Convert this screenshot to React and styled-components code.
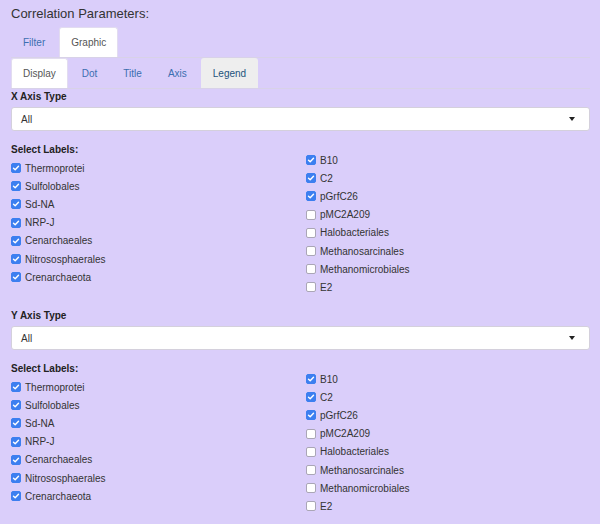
import React from "react";
import styled, { createGlobalStyle } from "styled-components";

const GlobalStyle = createGlobalStyle`
  html, body {
    margin: 0;
    padding: 0;
    background: #dacefa;
  }
  body {
    font-family: "Liberation Sans", Arial, sans-serif;
    color: #333;
  }
`;

const Page = styled.div`
  padding: 6px 10px 0 11px;
  width: 579px;
`;

const Title = styled.div`
  font-size: 13px;
  line-height: 15px;
  color: #333;
  margin-bottom: 6px;
`;

const TabBar = styled.div`
  display: flex;
  border-bottom: 1px solid #d8d2e8;
`;

const Tab = styled.div`
  font-size: 10px;
  line-height: 15px;
  padding: 7px 11px;
  margin-right: 2px;
  border: 1px solid transparent;
  border-bottom: none;
  border-radius: 3px 3px 0 0;
  color: ${(p) => (p.$active ? "#555" : p.$hover ? "#23527c" : "#3a6fb0")};
  background: ${(p) => (p.$active ? "#fff" : p.$hover ? "#eee" : "transparent")};
  border-color: ${(p) => (p.$active ? "#e2dcf0" : "transparent")};
`;

const Section = styled.div`
  margin-bottom: 11.5px;
`;

const FieldLabel = styled.div`
  font-size: 10px;
  font-weight: bold;
  line-height: 15px;
  color: #222;
  margin-bottom: 3px;
`;

const Select = styled.div`
  height: 24px;
  box-sizing: border-box;
  background: #fff;
  border: 1px solid #d4d0dc;
  border-radius: 3px;
  display: flex;
  align-items: center;
  padding: 0 9px;
  font-size: 10px;
  color: #333;
  margin-bottom: 11px;
`;

const Caret = styled.span`
  margin-left: auto;
  margin-right: 5px;
  width: 0;
  height: 0;
  border-left: 3.5px solid transparent;
  border-right: 3.5px solid transparent;
  border-top: 4px solid #222;
`;

const Columns = styled.div`
  display: grid;
  grid-template-columns: 295px 1fr;
  align-items: start;
`;

const Group = styled.div`
  padding-top: ${(p) => (p.$offset ? "9px" : "0")};
`;

const GroupLabel = styled(FieldLabel)`
  margin-bottom: 2px;
`;

const CheckRow = styled.label`
  display: flex;
  align-items: center;
  height: 18.2px;
  font-size: 10px;
  color: #333;
`;

const Box = styled.span`
  width: 10px;
  height: 10px;
  box-sizing: border-box;
  border-radius: 2px;
  margin-right: 4px;
  display: inline-flex;
  align-items: center;
  justify-content: center;
  background: ${(p) => (p.$checked ? "#3c7ff0" : "#fff")};
  border: 1px solid ${(p) => (p.$checked ? "#3c7ff0" : "#aaa6b6")};
`;

const leftLabels = [
  "Thermoprotei",
  "Sulfolobales",
  "Sd-NA",
  "NRP-J",
  "Cenarchaeales",
  "Nitrososphaerales",
  "Crenarchaeota",
];

const rightLabels = [
  ["B10", true],
  ["C2", true],
  ["pGrfC26", true],
  ["pMC2A209", false],
  ["Halobacteriales", false],
  ["Methanosarcinales", false],
  ["Methanomicrobiales", false],
  ["E2", false],
];

function Check({ label, checked }) {
  return (
    <CheckRow>
      <Box $checked={checked}>
        {checked && (
          <svg width="8" height="8" viewBox="0 0 8 8">
            <path d="M1.5 4.2 L3.2 5.8 L6.5 2.2" fill="none" stroke="#fff" strokeWidth="1.4" strokeLinecap="round" strokeLinejoin="round" />
          </svg>
        )}
      </Box>
      {label}
    </CheckRow>
  );
}

function AxisSection({ title }) {
  return (
    <Section>
      <FieldLabel>{title}</FieldLabel>
      <Select>
        All
        <Caret />
      </Select>
      <Columns>
        <Group>
          <GroupLabel>Select Labels:</GroupLabel>
          {leftLabels.map((l) => (
            <Check key={l} label={l} checked />
          ))}
        </Group>
        <Group $offset>
          {rightLabels.map(([l, c]) => (
            <Check key={l} label={l} checked={c} />
          ))}
        </Group>
      </Columns>
    </Section>
  );
}

export default function App() {
  return (
    <>
      <GlobalStyle />
      <Page>
        <Title>Correlation Parameters:</Title>
        <TabBar>
          <Tab>Filter</Tab>
          <Tab $active>Graphic</Tab>
        </TabBar>
        <TabBar>
          <Tab $active>Display</Tab>
          <Tab>Dot</Tab>
          <Tab>Title</Tab>
          <Tab>Axis</Tab>
          <Tab $hover>Legend</Tab>
        </TabBar>
        <AxisSection title="X Axis Type" />
        <AxisSection title="Y Axis Type" />
      </Page>
    </>
  );
}
